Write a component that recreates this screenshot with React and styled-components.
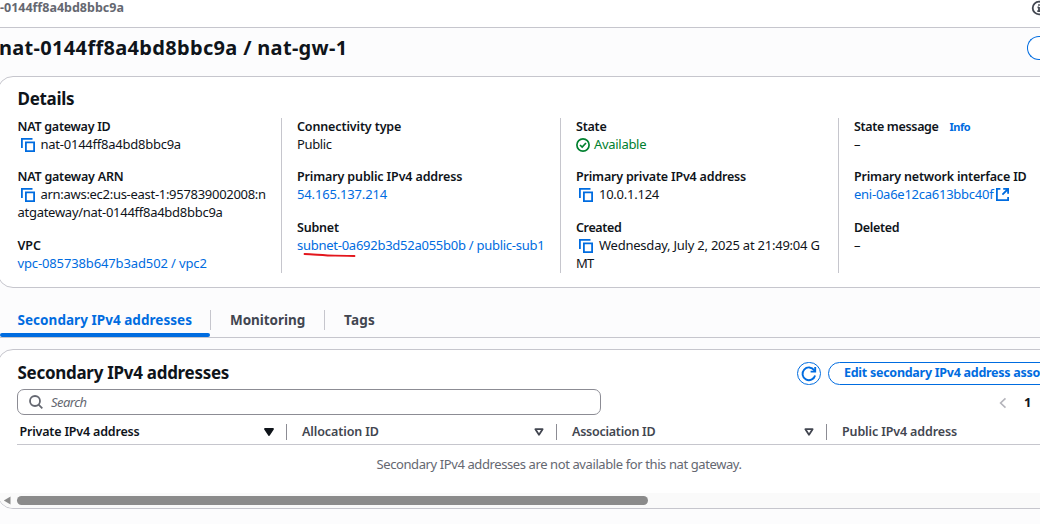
import React from "react";
import styled, { createGlobalStyle } from "styled-components";

const GlobalStyle = createGlobalStyle`
  *, *::before, *::after { box-sizing: border-box; }
  body {
    margin: 0;
    background: #fcfcfd;
    color: #0f141a;
    font-family: "Noto Sans", "Open Sans", sans-serif;
    font-size: 13px;
    overflow: hidden;
  }
  svg { display: block; flex: none; }
`;

const blue = "#006ce0";
const line = "#c6c6cd";

const Page = styled.div`
  width: 1040px;
  height: 524px;
  overflow: hidden;
`;

const TopBar = styled.header`
  display: flex;
  justify-content: space-between;
  height: 28px;
  background: #fff;
  border-bottom: 1px solid ${line};
`;

const Breadcrumb = styled.span`
  line-height: 16px;
  font-size: 12.5px;
  font-weight: 700;
  color: #656871;
  white-space: nowrap;
`;

const InfoToggle = styled.div`
  width: 9px;
  overflow: hidden;
  color: #424650;
`;

const TitleRow = styled.div`
  display: flex;
  justify-content: space-between;
  height: 48px;
  padding-top: 8px;
`;

const Title = styled.h1`
  margin: 0 0 0 -1px;
  font-size: 20px;
  line-height: 24px;
  font-weight: 700;
  letter-spacing: 0.32px;
  white-space: nowrap;
`;

const TitleAction = styled.div`
  width: 13px;
  height: 24px;
  border: 1px solid ${blue};
  border-right: 0;
  border-radius: 12px 0 0 12px;
  background: #fff;
`;

const Card = styled.section`
  width: 1060px;
  height: ${(p) => p.$height}px;
  margin-left: -3px;
  border: 1px solid ${line};
  border-radius: 16px;
  background: #fff;
  overflow: hidden;
`;

const CardTitle = styled.h2`
  margin: 0;
  font-size: 17px;
  line-height: 24px;
  font-weight: 700;
  letter-spacing: -0.29px;
  white-space: nowrap;
`;

const DetailsHead = styled.div`
  padding: 10px 0 0 19.5px;
  height: 41px;
`;

const Columns = styled.div`
  display: grid;
  grid-template-columns: 263.5px 279px 278px 220px;
  height: 155px;
  margin-left: 19.5px;
`;

const Column = styled.div`
  padding-left: ${(p) => (p.$first ? 0 : 15)}px;
  border-left: ${(p) => (p.$first ? "0" : `1px solid ${line}`)};
`;

const Field = styled.div`
  & + & { margin-top: 14px; }
  & + & + & { margin-top: 15px; }
`;

const Label = styled.div`
  display: flex;
  height: 18px;
  line-height: 18px;
  font-size: 12.5px;
  font-weight: 600;
  letter-spacing: ${(p) => p.$ls}px;
  white-space: nowrap;
`;

const InfoLink = styled.a`
  margin-left: 11px;
  font-size: 11px;
  font-weight: 700;
  letter-spacing: -0.5px;
  color: ${blue};
`;

const Value = styled.div`
  display: flex;
  align-items: center;
  height: 18px;
  padding-bottom: 2px;
  line-height: 16px;
  letter-spacing: ${(p) => p.$ls}px;
  color: ${(p) => p.$color || "inherit"};
  white-space: nowrap;
`;

const CopyGlyph = styled.svg`
  margin: 1px 6px 0 3px;
`;

const StatusGlyph = styled.svg`
  margin: 2px 4px 0 0;
`;

const LinkGlyph = styled.svg`
  margin: 1px 0 0 3px;
`;

const Underlined = styled.div`
  position: relative;
`;

const Stroke = styled.svg`
  position: absolute;
  left: 6px;
  top: 15px;
`;

const Tabs = styled.nav`
  display: flex;
  height: 50px;
  border-bottom: 1px solid ${line};
`;

const Tab = styled.div`
  display: flex;
  flex-direction: column;
  justify-content: space-between;
  padding-top: 22px;
  width: ${(p) => p.$width}px;
  color: ${(p) => (p.$active ? blue : "#424650")};
`;

const TabLabel = styled.span`
  height: 20px;
  line-height: 20px;
  padding-left: ${(p) => p.$pad}px;
  border-right: ${(p) => (p.$last ? "0" : `1px solid ${line}`)};
  font-size: 13.5px;
  font-weight: 700;
  letter-spacing: ${(p) => p.$ls}px;
  white-space: nowrap;
`;

const TabMarker = styled.i`
  width: 210px;
  height: 4px;
  border-radius: 2px;
  background: ${blue};
`;

const Spacer = styled.div`
  height: 11px;
`;

const TableHead = styled.div`
  display: flex;
  height: 39px;
  padding: 12px 0 0 19px;
`;

const HeadTitle = styled.div`
  flex: none;
  width: 780px;
  margin-top: -1px;
  padding-left: 0.5px;
`;

const RefreshButton = styled.div`
  display: flex;
  flex: none;
  align-items: center;
  justify-content: center;
  width: 24px;
  height: 23px;
  margin-right: 7px;
  border: 1px solid ${blue};
  border-radius: 12px;
`;

const EditButton = styled.div`
  flex: none;
  width: 270px;
  height: 23px;
  padding-left: 15px;
  border: 1px solid ${blue};
  border-radius: 12px;
  line-height: 19px;
  font-size: 12.5px;
  font-weight: 700;
  letter-spacing: -0.27px;
  color: ${blue};
  white-space: nowrap;
`;

const Filters = styled.div`
  display: flex;
  height: 26px;
  padding-left: 19px;
`;

const SearchBox = styled.div`
  display: flex;
  align-items: center;
  width: 584px;
  height: 26px;
  padding: 0 0 1px 11px;
  border: 1px solid #8c8c94;
  border-radius: 7px;
  font-style: italic;
  letter-spacing: -0.55px;
  color: #656871;
`;

const SearchGlyph = styled.svg`
  margin: 1px 8px 0 0;
`;

const Pager = styled.div`
  display: flex;
  align-items: center;
  gap: 17px;
  margin-left: 398px;
  font-size: 13px;
  font-weight: 700;
  color: #0f141a;
`;

const PrevGlyph = styled.svg`
  margin-top: 2px;
`;

const HeaderCells = styled.div`
  display: flex;
  align-items: center;
  height: 30px;
  margin-left: 19px;
  padding-top: 4px;
  border-bottom: 1px solid ${line};
`;

const HeaderCell = styled.div`
  display: flex;
  align-items: center;
  justify-content: space-between;
  flex: none;
  width: ${(p) => p.$width}px;
  height: 16px;
  padding: 0 12px 0 ${(p) => p.$pad}px;
  border-right: 1px solid #8c8c94;
  font-size: 12.5px;
  font-weight: 600;
  letter-spacing: ${(p) => p.$ls}px;
  color: ${(p) => (p.$active ? "#0f141a" : "#424650")};
  white-space: nowrap;
`;

const Empty = styled.div`
  height: 48px;
  padding: 10px 0 0 378.5px;
  line-height: 19px;
  letter-spacing: -0.4px;
  color: #656871;
  white-space: nowrap;
`;

const ScrollTrack = styled.div`
  display: flex;
  align-items: center;
  height: 15px;
  padding-left: 5px;
  background: #fafafa;
`;

const ScrollThumb = styled.div`
  width: 631px;
  height: 9px;
  margin-left: 6px;
  border-radius: 5px;
  background: #8b8b8b;
`;

const CopyIcon = () => (
  <CopyGlyph width="14" height="14" viewBox="0 0 14 14" fill="none" stroke={blue} strokeWidth="1.8">
    <path d="M0.9 10V0.9H11.5" />
    <path d="M4.9 4.4H13.1V13.1H4.9Z" />
  </CopyGlyph>
);

const CheckIcon = () => (
  <StatusGlyph width="14" height="14" viewBox="0 0 14 14" fill="none" stroke="#00802f" strokeWidth="1.7">
    <circle cx="7" cy="7" r="6.1" />
    <path d="M4 7L6.2 9.1L10 5" />
  </StatusGlyph>
);

const ExternalIcon = () => (
  <LinkGlyph width="13" height="13" viewBox="0 0 13 13" fill="none" stroke={blue} strokeWidth="1.8">
    <path d="M4.4 0.9H0.9V12.1H12.1V8.9" />
    <path d="M7.2 0.9H12.1V5.8M12 1L6.4 6.6" />
  </LinkGlyph>
);

const SortIcon = ({ filled }) => (
  <svg width="10" height="8" viewBox="0 0 10 8" fill={filled ? "currentColor" : "none"} stroke="currentColor" strokeWidth="1.8" strokeLinejoin="round">
    <path d={filled ? "M1 1H9L5 7Z" : "M1.4 1.2H8.6L5 6.8Z"} />
  </svg>
);

export default function App() {
  return (
    <>
      <GlobalStyle />
      <Page>
        <TopBar>
          <Breadcrumb>-0144ff8a4bd8bbc9a</Breadcrumb>
          <InfoToggle>
            <svg width="16" height="16" viewBox="0 0 16 16" fill="none" stroke="currentColor" strokeWidth="1.8">
              <circle cx="8" cy="8" r="6.3" />
              <path d="M8 7V11.5M6.5 7.3H8M6.3 11.2H9.7M8 4.2V5.8" />
            </svg>
          </InfoToggle>
        </TopBar>
        <TitleRow>
          <Title>nat-0144ff8a4bd8bbc9a / nat-gw-1</Title>
          <TitleAction />
        </TitleRow>

        <Card $height={212}>
          <DetailsHead>
            <CardTitle>Details</CardTitle>
          </DetailsHead>
          <Columns>
            <Column $first>
              <Field>
                <Label $ls={-0.26}>NAT gateway ID</Label>
                <Value $ls={-0.24}><CopyIcon />nat-0144ff8a4bd8bbc9a</Value>
              </Field>
              <Field>
                <Label $ls={-0.22}>NAT gateway ARN</Label>
                <Value $ls={-0.29}><CopyIcon />arn:aws:ec2:us-east-1:957839002008:n</Value>
                <Value $ls={-0.27}>atgateway/nat-0144ff8a4bd8bbc9a</Value>
              </Field>
              <Field>
                <Label $ls={-0.1}>VPC</Label>
                <Value $ls={-0.13} $color={blue}>vpc-085738b647b3ad502 / vpc2</Value>
              </Field>
            </Column>
            <Column>
              <Field>
                <Label $ls={-0.13}>Connectivity type</Label>
                <Value $ls={-0.35}>Public</Value>
              </Field>
              <Field>
                <Label $ls={-0.14}>Primary public IPv4 address</Label>
                <Value $ls={-0.16} $color={blue}>54.165.137.214</Value>
              </Field>
              <Field>
                <Label $ls={-0.2}>Subnet</Label>
                <Underlined>
                  <Value $ls={-0.26} $color={blue}>subnet-0a692b3d52a055b0b / public-sub1</Value>
                  <Stroke width="54" height="6" viewBox="0 0 54 6" fill="none" stroke="#e3161c" strokeWidth="1.8" strokeLinecap="round">
                    <path d="M1.5 2C12 2.4 22 3.6 32 3.6S46 4 51.5 4" />
                  </Stroke>
                </Underlined>
              </Field>
            </Column>
            <Column>
              <Field>
                <Label $ls={-0.22}>State</Label>
                <Value $ls={-0.3} $color="#00802f"><CheckIcon />Available</Value>
              </Field>
              <Field>
                <Label $ls={-0.19}>Primary private IPv4 address</Label>
                <Value $ls={-0.25}><CopyIcon />10.0.1.124</Value>
              </Field>
              <Field>
                <Label $ls={-0.38}>Created</Label>
                <Value $ls={-0.23}><CopyIcon />Wednesday, July 2, 2025 at 21:49:04 G</Value>
                <Value $ls={-0.7}>MT</Value>
              </Field>
            </Column>
            <Column>
              <Field>
                <Label $ls={-0.34}>State message<InfoLink>Info</InfoLink></Label>
                <Value>–</Value>
              </Field>
              <Field>
                <Label $ls={-0.19}>Primary network interface ID</Label>
                <Value $ls={-0.25} $color={blue}>eni-0a6e12ca613bbc40f<ExternalIcon /></Value>
              </Field>
              <Field>
                <Label $ls={-0.33}>Deleted</Label>
                <Value>–</Value>
              </Field>
            </Column>
          </Columns>
        </Card>

        <Tabs>
          <Tab $width={211} $active>
            <TabLabel $pad={17.5} $ls={0.04}>Secondary IPv4 addresses</TabLabel>
            <TabMarker />
          </Tab>
          <Tab $width={114}>
            <TabLabel $pad={19} $ls={-0.05}>Monitoring</TabLabel>
          </Tab>
          <Tab $width={100}>
            <TabLabel $pad={19} $ls={0.2} $last>Tags</TabLabel>
          </Tab>
        </Tabs>
        <Spacer />

        <Card $height={160}>
          <TableHead>
            <HeadTitle><CardTitle>Secondary IPv4 addresses</CardTitle></HeadTitle>
            <RefreshButton>
              <svg width="16" height="16" viewBox="0 0 16 16" fill="none" stroke={blue} strokeWidth="1.9">
                <path d="M14.1 9.5A6.4 6.4 0 1 1 13.2 4.2L14 5.5" />
                <path d="M14.2 1V5.6H9.6" />
              </svg>
            </RefreshButton>
            <EditButton>Edit secondary IPv4 address associations</EditButton>
          </TableHead>
          <Filters>
            <SearchBox>
              <SearchGlyph width="14" height="14" viewBox="0 0 14 14" fill="none" stroke="#656871" strokeWidth="1.8">
                <circle cx="6" cy="6" r="5" />
                <path d="M9.6 9.6L13.3 13.3" />
              </SearchGlyph>
              Search
            </SearchBox>
            <Pager>
              <PrevGlyph width="8" height="12" viewBox="0 0 9 12" fill="none" stroke="#b4b4bb" strokeWidth="1.8">
                <path d="M7.3 0.8L1.8 6L7.3 11.2" />
              </PrevGlyph>
              1
            </Pager>
          </Filters>
          <HeaderCells>
            <HeaderCell $width={270} $pad={2.5} $ls={-0.19} $active>Private IPv4 address<SortIcon filled /></HeaderCell>
            <HeaderCell $width={270} $pad={15} $ls={-0.09}>Allocation ID<SortIcon /></HeaderCell>
            <HeaderCell $width={270} $pad={15} $ls={-0.25}>Association ID<SortIcon /></HeaderCell>
            <HeaderCell $width={270} $pad={15} $ls={-0.13}>Public IPv4 address</HeaderCell>
          </HeaderCells>
          <Empty>Secondary IPv4 addresses are not available for this nat gateway.</Empty>
          <ScrollTrack>
            <svg width="8" height="9" viewBox="0 0 8 9" fill="#8b8b8b">
              <path d="M7.5 0.5V8.5L0.8 4.5Z" />
            </svg>
            <ScrollThumb />
          </ScrollTrack>
        </Card>
      </Page>
    </>
  );
}
